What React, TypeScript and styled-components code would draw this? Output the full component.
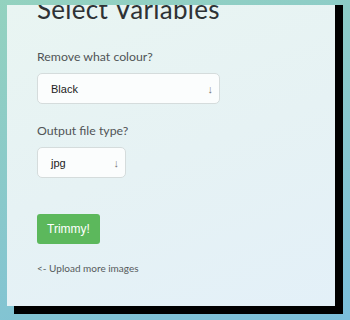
import styled, { createGlobalStyle } from "styled-components";

const GlobalStyle = createGlobalStyle`
  html, body {
    margin: 0;
    padding: 0;
    height: 100%;
  }
  body {
    background: linear-gradient(160deg, #94d2bf 0%, #88c8cc 50%, #7bbedb 100%);
    font-family: "Lato", "Liberation Sans", sans-serif;
    overflow: hidden;
  }
`;

const Page = styled.div`
  width: 350px;
  height: 320px;
  padding: 5px 15px 0 7px;
  box-sizing: border-box;
`;

const Card = styled.div`
  width: 328px;
  height: 301px;
  box-sizing: border-box;
  padding: 0 30px;
  overflow: hidden;
  display: flex;
  flex-direction: column;
  align-items: flex-start;
  background: linear-gradient(160deg, #e9f5f2 0%, #e6f2f4 50%, #e3f0f8 100%);
  box-shadow: 8px 0 0 #000, 7px 8px 0 #000, 8px 8px 0 #000;
`;

const Title = styled.h1`
  margin: -12px 0 0;
  font-size: 26px;
  line-height: 32px;
  font-weight: 400;
  letter-spacing: 0.3px;
  color: #2e3235;
`;

const Label = styled.label<{ $gap: number }>`
  margin-top: ${(p) => p.$gap}px;
  font-size: 12.3px;
  line-height: 16px;
  color: #505456;
`;

const SelectBox = styled.div<{ $width: number }>`
  margin-top: 8px;
  width: ${(p) => p.$width}px;
  height: 31px;
  box-sizing: border-box;
  display: flex;
  align-items: center;
  justify-content: space-between;
  padding: 0 6px 0 13px;
  background: #fbfdfd;
  border: 1px solid #d5dcdc;
  border-radius: 5px;
  font-family: "Liberation Sans", Arial, sans-serif;
  font-size: 11px;
  color: #222;
`;

const Arrow = styled.span`
  font-size: 11px;
  color: #777;
`;

const Button = styled.button`
  margin-top: 36px;
  width: 63px;
  height: 30px;
  border: none;
  border-radius: 3px;
  background: #5cb85c;
  color: #fff;
  font-family: "Liberation Sans", Arial, sans-serif;
  font-size: 12px;
  padding: 0;
`;

const BackLink = styled.a`
  margin-top: 18px;
  font-size: 10px;
  line-height: 12px;
  color: #555a5c;
  text-decoration: none;
`;

export default function App() {
  return (
    <>
      <GlobalStyle />
      <Page>
        <Card>
          <Title>Select Variables</Title>
          <Label $gap={24}>Remove what colour?</Label>
          <SelectBox $width={183}>
            <span>Black</span>
            <Arrow>↓</Arrow>
          </SelectBox>
          <Label $gap={19}>Output file type?</Label>
          <SelectBox $width={89}>
            <span>jpg</span>
            <Arrow>↓</Arrow>
          </SelectBox>
          <Button>Trimmy!</Button>
          <BackLink>&lt;- Upload more images</BackLink>
        </Card>
      </Page>
    </>
  );
}
